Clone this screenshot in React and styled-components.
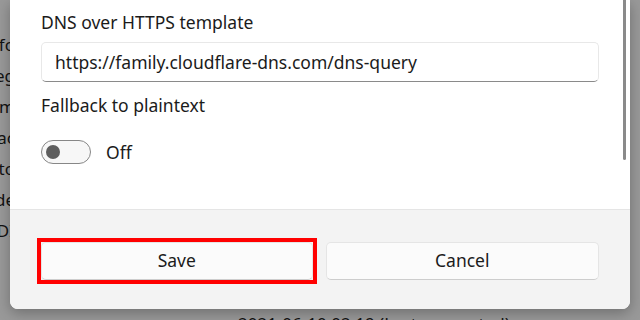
import styled, { createGlobalStyle } from 'styled-components';

const Global = createGlobalStyle`
  html, body { margin: 0; padding: 0; }
  body { font-family: "Noto Sans", "Open Sans", sans-serif; }
`;

const Page = styled.div`
  position: relative;
  width: 640px;
  height: 320px;
  overflow: hidden;
  background: #f3f3f3;
`;

const BackContent = styled.div`
  width: 15px;
  display: flex;
  flex-direction: column;
  align-items: flex-end;
  padding-top: 29px;
  color: #1e1e1e;
  font-size: 17px;
`;

const BackLine = styled.div`
  height: 31px;
  line-height: 31px;
  white-space: nowrap;
`;

const BackFooter = styled.div`
  position: absolute;
  left: 238px;
  top: 312px;
  font-size: 17px;
  color: #1e1e1e;
  white-space: nowrap;
`;

const Scrim = styled.div`
  position: absolute;
  inset: 0;
  background: rgba(0, 0, 0, 0.37);
`;

const Dialog = styled.div`
  position: absolute;
  left: 10px;
  top: 0;
  width: 620px;
  height: 309px;
  display: flex;
  flex-direction: column;
  background: #ffffff;
  border-radius: 0 0 8px 8px;
  overflow: hidden;
  box-shadow: 0 4px 14px rgba(0, 0, 0, 0.28);
`;

const Body = styled.div`
  position: relative;
  height: 209px;
  box-sizing: border-box;
  padding: 10px 31px 0 31px;
  display: flex;
  flex-direction: column;
`;

const Label = styled.div`
  font-size: 17.5px;
  line-height: 24px;
  color: #1b1b1b;
  margin-top: ${p => p.$gap || 0}px;
`;

const Input = styled.div`
  margin-top: 8px;
  height: 40px;
  box-sizing: border-box;
  border: 1px solid #e8e8e8;
  border-bottom: 1px solid #8a8a8a;
  border-radius: 5px;
  background: #ffffff;
  display: flex;
  align-items: center;
  padding: 0 13px 1px 13px;
  font-size: 17.5px;
  color: #1b1b1b;
`;

const ToggleRow = styled.div`
  margin-top: 23px;
  display: flex;
  align-items: center;
  gap: 15px;
`;

const Toggle = styled.div`
  width: 50px;
  height: 24px;
  box-sizing: border-box;
  border: 1px solid #878787;
  border-radius: 12px;
  background: #f7f7f7;
  display: flex;
  align-items: center;
  padding-left: 4px;
`;

const Knob = styled.div`
  width: 14px;
  height: 14px;
  border-radius: 50%;
  background: #5d5d5d;
`;

const ToggleText = styled.span`
  font-size: 17.5px;
  color: #1b1b1b;
`;

const Thumb = styled.div`
  position: absolute;
  right: 4px;
  top: 0;
  width: 3px;
  height: 160px;
  border-radius: 0 0 2px 2px;
  background: #8a8a8a;
`;

const Footer = styled.div`
  flex: 1;
  background: #f3f3f3;
  border-top: 1px solid #e5e5e5;
  padding: 32px 31px 0 31px;
  display: flex;
  align-items: flex-start;
  gap: 13px;
`;

const Marked = styled.div`
  flex: 1;
  display: flex;
  outline: 4px solid #ff0000;
`;

const Button = styled.div`
  flex: 1;
  height: 38px;
  box-sizing: border-box;
  border: 1px solid #e5e5e5;
  border-bottom-color: #cdcdcd;
  border-radius: 5px;
  background: #fbfbfb;
  display: flex;
  align-items: center;
  justify-content: center;
  padding-bottom: 3px;
  font-size: 17.5px;
  color: #1b1b1b;
`;

export default function App() {
  return (
    <Page>
      <Global />
      <BackContent>
        <BackLine>Choose a provider fo</BackLine>
        <BackLine>Network over encrypted reg</BackLine>
        <BackLine>Use this for every system m</BackLine>
        <BackLine>Preferred DNS provider ac</BackLine>
        <BackLine>Alternate DNS protocol to</BackLine>
        <BackLine>Fallback to plaintext mode</BackLine>
        <BackLine>Provider for DoH template DI</BackLine>
      </BackContent>
      <BackFooter>2021-06-10 02:19 (Last connected)</BackFooter>
      <Scrim />
      <Dialog>
        <Body>
          <Label>DNS over HTTPS template</Label>
          <Input>https://family.cloudflare-dns.com/dns-query</Input>
          <Label $gap={11}>Fallback to plaintext</Label>
          <ToggleRow>
            <Toggle>
              <Knob />
            </Toggle>
            <ToggleText>Off</ToggleText>
          </ToggleRow>
          <Thumb />
        </Body>
        <Footer>
          <Marked>
            <Button>Save</Button>
          </Marked>
          <Button>Cancel</Button>
        </Footer>
      </Dialog>
    </Page>
  );
}
